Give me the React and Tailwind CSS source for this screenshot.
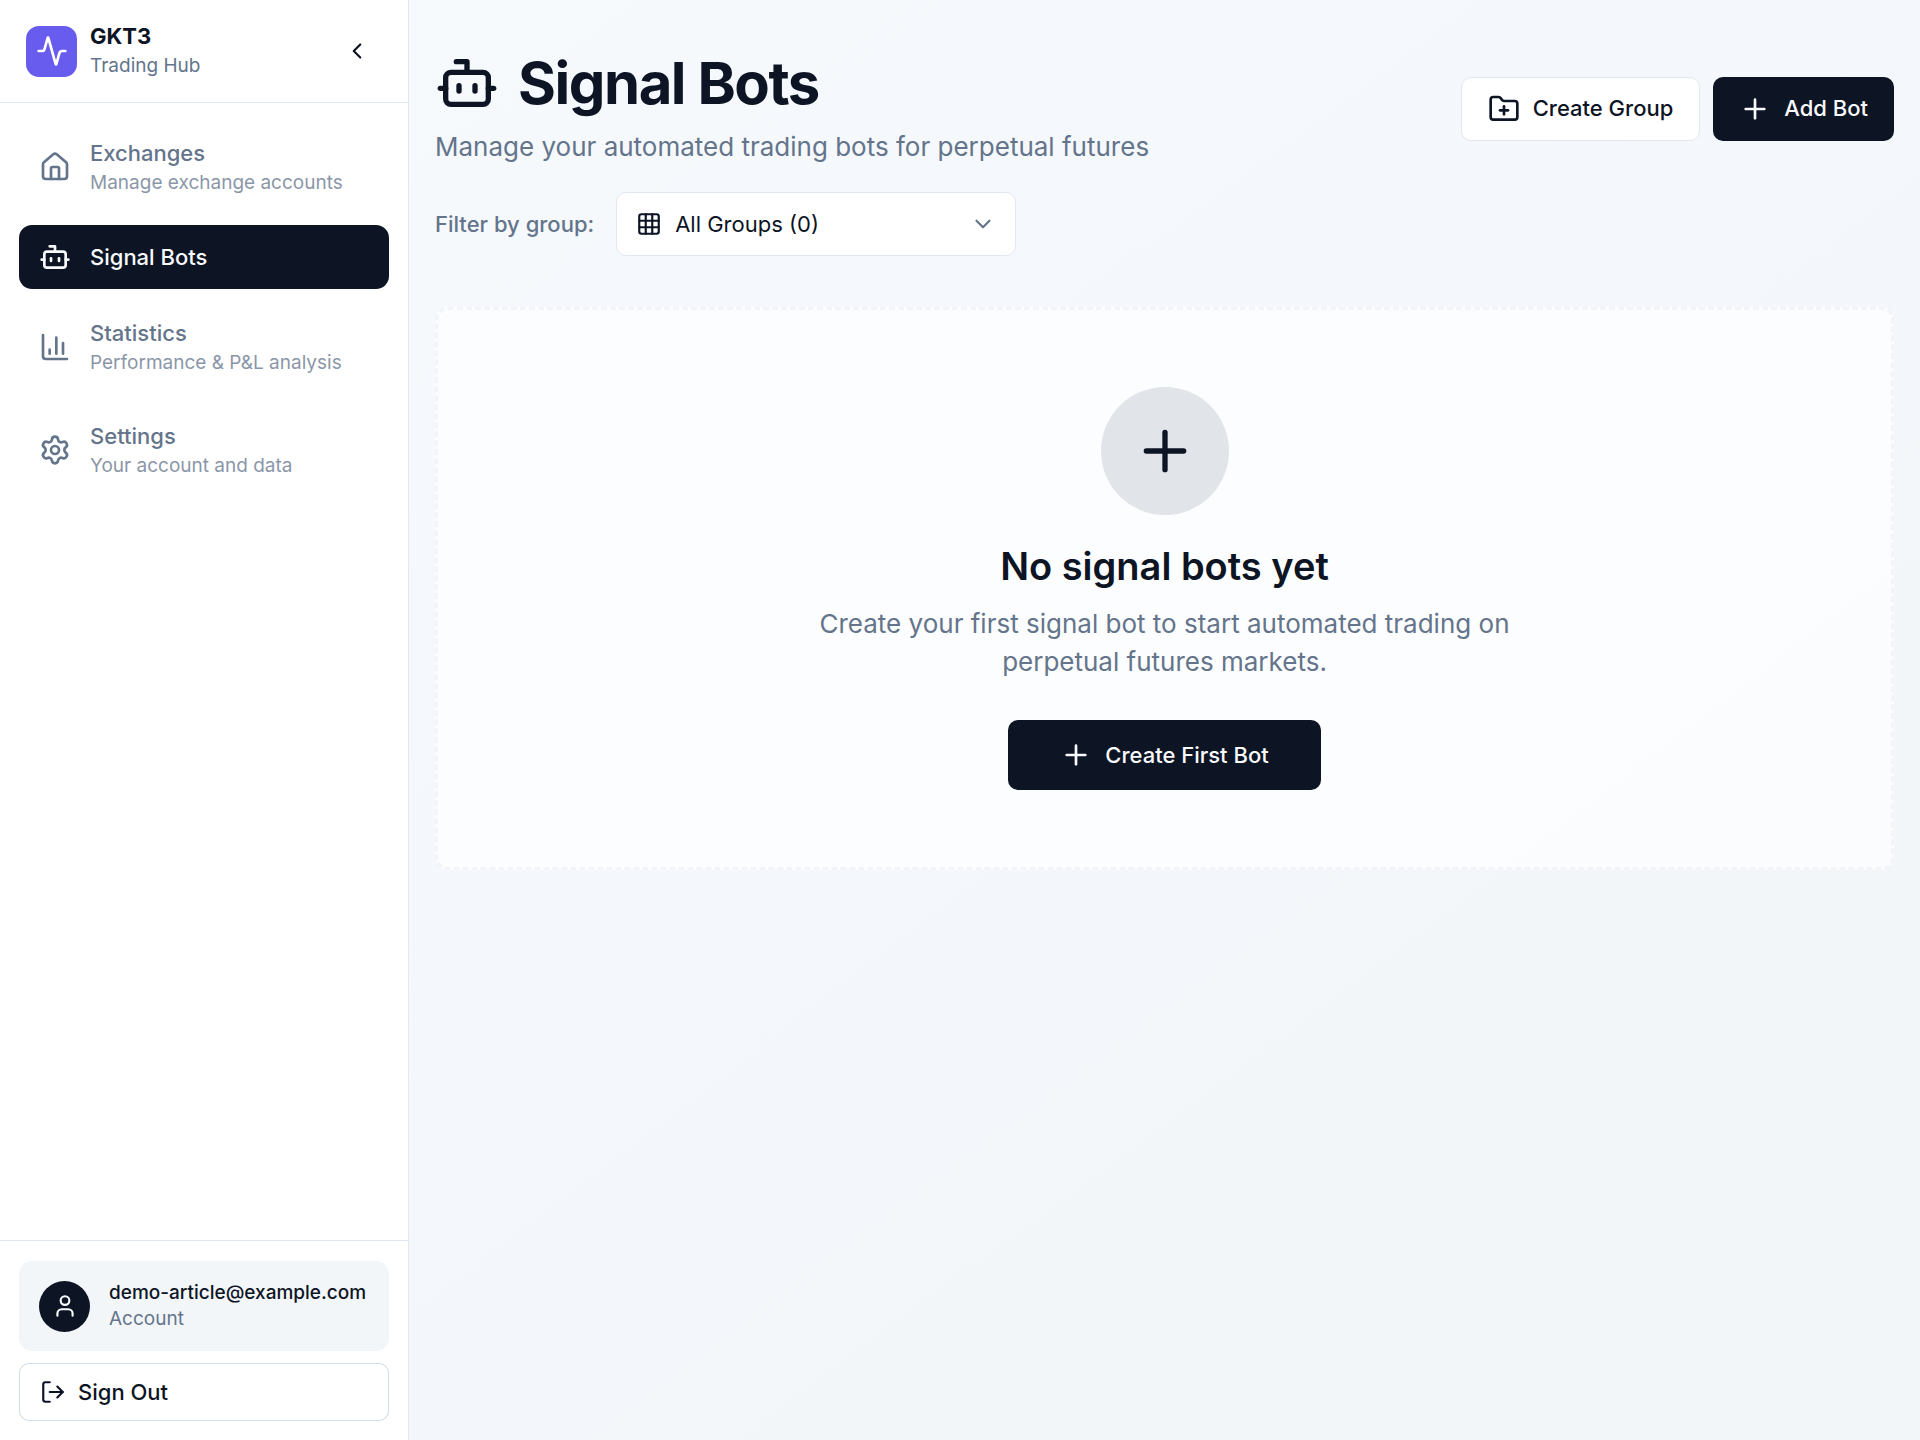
import React, { useState } from 'react';
import {
  Activity,
  Bot,
  ChartColumn,
  ChevronDown,
  ChevronLeft,
  FolderPlus,
  Grid3x3,
  House,
  LogOut,
  Plus,
  Settings,
  User,
} from 'lucide-react';

const navItems = [
  { name: 'Exchanges', description: 'Manage exchange accounts', icon: House },
  { name: 'Signal Bots', icon: Bot },
  { name: 'Statistics', description: 'Performance & P&L analysis', icon: ChartColumn },
  { name: 'Settings', description: 'Your account and data', icon: Settings },
];

function NavItem({ item, active, onSelect }) {
  const Icon = item.icon;

  return (
    <a
      href="#"
      onClick={onSelect}
      className={`flex items-center gap-[19px] rounded-[13px] px-5 ${
        active ? 'h-16 bg-[#0d1424] text-slate-50' : 'h-[90px] text-[#64748b]'
      }`}
    >
      <Icon className="size-8 shrink-0" />
      <div className={active ? 'min-w-0' : 'min-w-0 pt-0.5'}>
        <div className="text-[22px] leading-[29px] font-medium">{item.name}</div>
        {!active && item.description && (
          <div className="text-[19px] leading-[29px] opacity-75">{item.description}</div>
        )}
      </div>
    </a>
  );
}

function Sidebar() {
  const [current, setCurrent] = useState('Signal Bots');

  return (
    <aside className="flex w-[409px] shrink-0 flex-col border-r border-slate-200 bg-white">
      <div className="flex items-center justify-between border-b border-slate-200 px-[26px] py-[22px]">
        <div className="flex items-center gap-[13px]">
          <div className="flex size-[51px] items-center justify-center rounded-[13px] bg-[#685cee]">
            <Activity className="size-8 text-white" />
          </div>
          <div>
            <div className="text-[22px] leading-[29px] font-bold">GKT3</div>
            <div className="text-[19px] leading-[29px] text-[#64748b]">Trading Hub</div>
          </div>
        </div>
        <button type="button" aria-label="Collapse sidebar" className="flex size-[51px] items-center justify-center rounded-[10px]">
          <ChevronLeft className="size-[26px]" />
        </button>
      </div>

      <nav className="flex flex-1 flex-col gap-[13px] p-[19px]">
        {navItems.map((item) => (
          <NavItem
            key={item.name}
            item={item}
            active={item.name === current}
            onSelect={() => setCurrent(item.name)}
          />
        ))}
      </nav>

      <div className="flex flex-col gap-3 border-t border-slate-200 px-[19px] pt-5 pb-[19px]">
        <div className="flex items-center gap-[19px] rounded-[13px] bg-[#f2f6f9] px-5 py-[19px]">
          <div className="flex size-[51px] shrink-0 items-center justify-center rounded-full bg-[#0d1424] text-slate-50">
            <User className="size-[26px]" />
          </div>
          <div className="min-w-0">
            <div className="text-[19px] leading-[26px] font-medium">demo-article@example.com</div>
            <div className="text-[19px] leading-[26px] text-[#64748b]">Account</div>
          </div>
        </div>
        <button type="button" className="flex h-[58px] items-center gap-3 rounded-[10px] border border-slate-300/80 bg-white px-5 text-[22px] font-medium">
          <LogOut className="size-[26px]" />
          Sign Out
        </button>
      </div>
    </aside>
  );
}

function PageHeader() {
  return (
    <header className="flex items-center justify-between">
      <div>
        <h1 className="flex items-center gap-[19px] text-[58px] leading-16 font-bold tracking-tight">
          <Bot className="size-16" />
          Signal Bots
        </h1>
        <p className="mt-[13px] text-[26px] leading-[38px] text-[#64748b]">
          Manage your automated trading bots for perpetual futures
        </p>
      </div>
      <div className="flex gap-[13px]">
        <button type="button" className="flex h-16 items-center gap-[13px] rounded-[10px] border border-slate-200 bg-white px-[26px] text-[22px] font-medium">
          <FolderPlus className="size-8" />
          Create Group
        </button>
        <button type="button" className="flex h-16 items-center gap-[13px] rounded-[10px] bg-[#0d1424] px-[26px] text-[22px] font-medium text-slate-50">
          <Plus className="size-8" />
          Add Bot
        </button>
      </div>
    </header>
  );
}

function GroupFilter() {
  return (
    <div className="mt-[26px] flex items-center gap-[22px]">
      <label htmlFor="group" className="text-[22px] font-medium text-[#64748b]">
        Filter by group:
      </label>
      <div className="relative">
        <select
          id="group"
          className="h-16 w-[400px] appearance-none rounded-[10px] border border-slate-200 bg-white pr-14 pl-[58px] text-[22px]"
        >
          <option>All Groups (0)</option>
        </select>
        <Grid3x3 className="pointer-events-none absolute top-[19px] left-5 size-[26px]" />
        <ChevronDown className="pointer-events-none absolute top-[19px] right-5 size-[26px] text-[#64748b]" />
      </div>
    </div>
  );
}

function EmptyState() {
  return (
    <section className="mt-[51px] flex flex-col items-center rounded-[13px] border-3 border-dashed border-[#f2f4f7] bg-white/70 p-[77px] text-center">
      <div className="flex size-32 items-center justify-center rounded-full bg-[#e1e4e9]">
        <Plus className="size-16" />
      </div>
      <h2 className="mt-[26px] text-[38px] leading-[51px] font-semibold">No signal bots yet</h2>
      <p className="mt-[13px] max-w-[717px] text-[26px] leading-[38px] text-[#64748b]">
        Create your first signal bot to start automated trading on perpetual futures markets.
      </p>
      <button type="button" className="mt-[39px] flex h-[70px] items-center gap-[13px] rounded-[10px] bg-[#0d1424] px-[52px] text-[22px] font-medium text-slate-50">
        <Plus className="size-8" />
        Create First Bot
      </button>
    </section>
  );
}

function App() {
  return (
    <div className="flex min-h-screen bg-linear-to-br from-[#f6fafd] via-[#f4f8fc] to-[#f2f6f9] to-80% font-['Inter',sans-serif] text-[#0d1424]">
      <Sidebar />
      <main className="min-w-0 flex-1 px-[26px] py-[51px]">
        <PageHeader />
        <GroupFilter />
        <EmptyState />
      </main>
    </div>
  );
}

export default App;
